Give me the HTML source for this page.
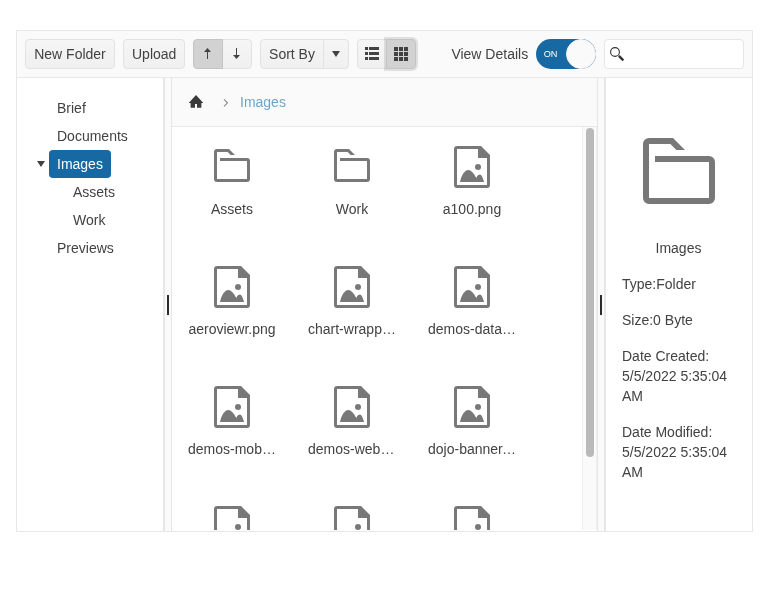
<!DOCTYPE html>
<html lang="en">
<head>
<meta charset="utf-8">
<title>FileManager</title>
<style>
*{box-sizing:border-box}
html,body{margin:0;padding:0;background:#fff}
body{width:770px;height:592px;position:relative;overflow:hidden;font-family:"Liberation Sans",Arial,sans-serif;font-size:14px;line-height:20px;color:#424242}
.fm{will-change:transform;position:absolute;left:16px;top:30px;width:737px;height:502px;border:1px solid #e8e8e8;background:#fff;overflow:hidden}
.toolbar{position:absolute;left:0;top:0;width:735px;height:47px;background:#fafafa;border-bottom:1px solid #e8e8e8}
.btn{position:absolute;top:8px;height:30px;border:1px solid #e2e2e2;border-radius:4px;background:linear-gradient(#f5f5f5,#f0f0f0);color:#424242;font:14px/20px "Liberation Sans",Arial,sans-serif;padding:4px 8px;text-align:center;white-space:nowrap}
.btn.icon{padding:6px 0 0 0}
.btn svg{display:block;margin:0 auto;width:16px;height:16px;fill:#424242}
.btn.sel{background:#d2d2d2;border-color:#c4c4c4;z-index:2}
.btn.first{border-top-right-radius:0;border-bottom-right-radius:0}
.btn.last{border-top-left-radius:0;border-bottom-left-radius:0}
.btn.focus{box-shadow:0 0 0 2px rgba(0,0,0,.1)}
.vd{position:absolute;left:434.4px;top:13px;white-space:nowrap}
.switch{position:absolute;left:519px;top:8px;width:60px;height:30px;border-radius:15px;background:#1769a3}
.switch .on{position:absolute;left:7.700px;top:5px;font-size:9.200px;line-height:20px;color:#fff;letter-spacing:0}
.switch .thumb{position:absolute;left:30px;top:0;width:30px;height:30px;border-radius:50%;background:#fafafa;border:1px solid #f3f3f3}
.search{position:absolute;left:587px;top:8px;width:140px;height:30px;border:1px solid #e6e6e6;border-radius:4px;background:#fff}
.search svg{position:absolute;left:4px;top:6px;width:16px;height:16px}
.nav{position:absolute;left:0;top:47px;width:147px;height:453px;background:#fff;border-right:1px solid #e8e8e8}
.nav ul{list-style:none;margin:0;padding:0}
.nav>ul{padding:16px 0 0 16px}
.nav li{position:relative;padding-left:16px}
.nav li span.t{display:inline-block;padding:4px 8px;height:28px;border-radius:4px;vertical-align:top}
.nav li span.t.sel{background:#1769a3;color:#fff}
.nav li svg{position:absolute;left:0;top:6px;width:16px;height:16px;fill:#424242}
.nav li{font-size:14px;line-height:20px}
.nav li>div{height:28px}
.split{position:absolute;top:47px;width:8px;height:453px;background:#fafafa;border-left:1px solid #e6e6e6;border-right:1px solid #e6e6e6}
.split i{position:absolute;left:2px;top:217px;width:2px;height:20px;background:#2b2b2b}
.content{position:absolute;left:155px;top:47px;width:425px;height:453px}
.crumb{position:absolute;left:0;top:0;width:425px;height:49px;background:#fafafa;border-bottom:1px solid #e8e8e8}
.crumb svg{position:absolute}
.crumb .lnk{position:absolute;left:68px;top:14px;color:#6ea5c8}
.list{position:absolute;left:0;top:49px;width:410px;height:403px;overflow:hidden}
.item{position:absolute;width:120px;height:120px;text-align:center}
.item svg{position:absolute;left:36px;top:16px;width:48px;height:48px;fill:#787878}
.item span{position:absolute;left:16px;top:72px;width:88px;height:20px;overflow:hidden;white-space:nowrap;text-overflow:ellipsis}
.sb{position:absolute;left:410px;top:49px;width:15px;height:403px;background:#fafafa;border-left:1px solid #ededed;border-right:1px solid #f1f1f1}
.sb i{position:absolute;left:3px;top:1px;width:8px;height:329px;border-radius:4px;background:#b9b9b9}
.preview{position:absolute;left:588px;top:47px;width:147px;height:453px;background:#fff;border-left:1px solid #e8e8e8}
.preview svg{position:absolute;left:25px;top:48px;width:96px;height:96px;fill:#787878}
.preview .title{position:absolute;left:-1px;top:160px;width:147px;text-align:center}
.preview .row{position:absolute;left:16px;white-space:nowrap}
</style>
</head>
<body>
<svg width="0" height="0" style="position:absolute">
<defs>
<symbol id="folder" viewBox="0 0 512 512"><path d="M128 160H416a32 32 0 0 1 32 32V384a32 32 0 0 1-32 32H96a32 32 0 0 1-32-32V96a32 32 0 0 1 32-32H224l64 64H242l-32-32H96V384H416V192H128Z"/></symbol>
<symbol id="img" viewBox="0 0 512 512"><path d="M96 32H352l96 96V448a32 32 0 0 1-32 32H96a32 32 0 0 1-32-32V64a32 32 0 0 1 32-32ZM96 64V448H416V160H320V64Z"/><circle cx="320" cy="256" r="32"/><path d="M128 416C144 340 182 288 216 288C252 288 284 338 301 373C311 352 324 336 339 336C362 336 378 386 384 416Z"/></symbol>
<symbol id="caret" viewBox="0 0 16 16"><path d="M4 5H12L8 11Z"/></symbol>
</defs>
</svg>
<div class="fm">
  <div class="toolbar">
    <div class="btn" style="left:8px;width:90px">New Folder</div>
    <div class="btn" style="left:106px;width:62px">Upload</div>
    <div class="btn icon sel first" style="left:176px;width:30px"><svg viewBox="0 0 16 16"><path d="M7 13V6H4L7.500 2L11 6H8V13Z"/></svg></div>
    <div class="btn icon last" style="left:205px;width:30px"><svg viewBox="0 0 16 16"><path d="M7 2V9H4L7.500 13L11 9H8V2Z"/></svg></div>
    <div class="btn first" style="left:243px;width:64px">Sort By</div>
    <div class="btn icon last" style="left:306px;width:26px"><svg><use href="#caret"/></svg></div>
    <div class="btn icon first" style="left:340px;width:30px"><svg viewBox="0 0 16 16"><path d="M1 1h3v3H1zM5 1h10v3H5zM1 6h3v3H1zM5 6h10v3H5zM1 11h3v3H1zM5 11h10v3H5z"/></svg></div>
    <div class="btn icon sel last focus" style="left:369px;width:30px"><svg viewBox="0 0 16 16"><path d="M1 1h4v4H1zM6 1h4v4H6zM11 1h4v4h-4zM1 6h4v4H1zM6 6h4v4H6zM11 6h4v4h-4zM1 11h4v4H1zM6 11h4v4H6zM11 11h4v4h-4z"/></svg></div>
    <div class="vd">View Details</div>
    <div class="switch"><span class="on">ON</span><span class="thumb"></span></div>
    <div class="search"><svg viewBox="0 0 16 16"><circle cx="6" cy="6" r="4.400" fill="none" stroke="#333" stroke-width="1.100"/><path d="M9.900 9.900L14.300 14.300" stroke="#333" stroke-width="2.400" fill="none"/></svg></div>
  </div>
  <div class="nav">
    <ul>
      <li><div><span class="t">Brief</span></div></li>
      <li><div><span class="t">Documents</span></div></li>
      <li><div><svg><use href="#caret"/></svg><span class="t sel">Images</span></div>
        <ul>
          <li><div><span class="t">Assets</span></div></li>
          <li><div><span class="t">Work</span></div></li>
        </ul>
      </li>
      <li><div><span class="t">Previews</span></div></li>
    </ul>
  </div>
  <div class="split" style="left:147px"><i></i></div>
  <div class="content">
    <div class="crumb">
      <svg style="left:16px;top:16px;width:16px;height:16px" viewBox="0 0 512 512"><path fill="#3a3a3a" d="M256 34L22 284H84V442H224V316H288V442H428V284H490Z"/></svg>
      <svg style="left:46px;top:16px;width:16px;height:16px" viewBox="0 0 16 16"><path d="M6 5.300L9.500 8.800L6 12.300" fill="none" stroke="#8a8a8a" stroke-width="1.100"/></svg>
      <span class="lnk">Images</span>
    </div>
    <div class="list">
      <div class="item" style="left:0;top:0"><svg><use href="#folder"/></svg><span>Assets</span></div>
      <div class="item" style="left:120px;top:0"><svg><use href="#folder"/></svg><span>Work</span></div>
      <div class="item" style="left:240px;top:0"><svg><use href="#img"/></svg><span>a100.png</span></div>
      <div class="item" style="left:0;top:120px"><svg><use href="#img"/></svg><span>aeroviewr.png</span></div>
      <div class="item" style="left:120px;top:120px"><svg><use href="#img"/></svg><span>chart-wrapper.png</span></div>
      <div class="item" style="left:240px;top:120px"><svg><use href="#img"/></svg><span>demos-datasource.png</span></div>
      <div class="item" style="left:0;top:240px"><svg><use href="#img"/></svg><span>demos-mobile.png</span></div>
      <div class="item" style="left:120px;top:240px"><svg><use href="#img"/></svg><span>demos-web.png</span></div>
      <div class="item" style="left:240px;top:240px"><svg><use href="#img"/></svg><span>dojo-banner.png</span></div>
      <div class="item" style="left:0;top:360px"><svg><use href="#img"/></svg><span>dojo-logo.png</span></div>
      <div class="item" style="left:120px;top:360px"><svg><use href="#img"/></svg><span>kendo-logo.png</span></div>
      <div class="item" style="left:240px;top:360px"><svg><use href="#img"/></svg><span>themebuilder.png</span></div>
    </div>
    <div class="sb"><i></i></div>
  </div>
  <div class="split" style="left:580px"><i></i></div>
  <div class="preview">
    <svg><use href="#folder"/></svg>
    <div class="title">Images</div>
    <div class="row" style="top:196px">Type:Folder</div>
    <div class="row" style="top:232px">Size:0 Byte</div>
    <div class="row" style="top:268px">Date Created:<br>5/5/2022 5:35:04<br>AM</div>
    <div class="row" style="top:344px">Date Modified:<br>5/5/2022 5:35:04<br>AM</div>
  </div>
</div>
</body>
</html>
